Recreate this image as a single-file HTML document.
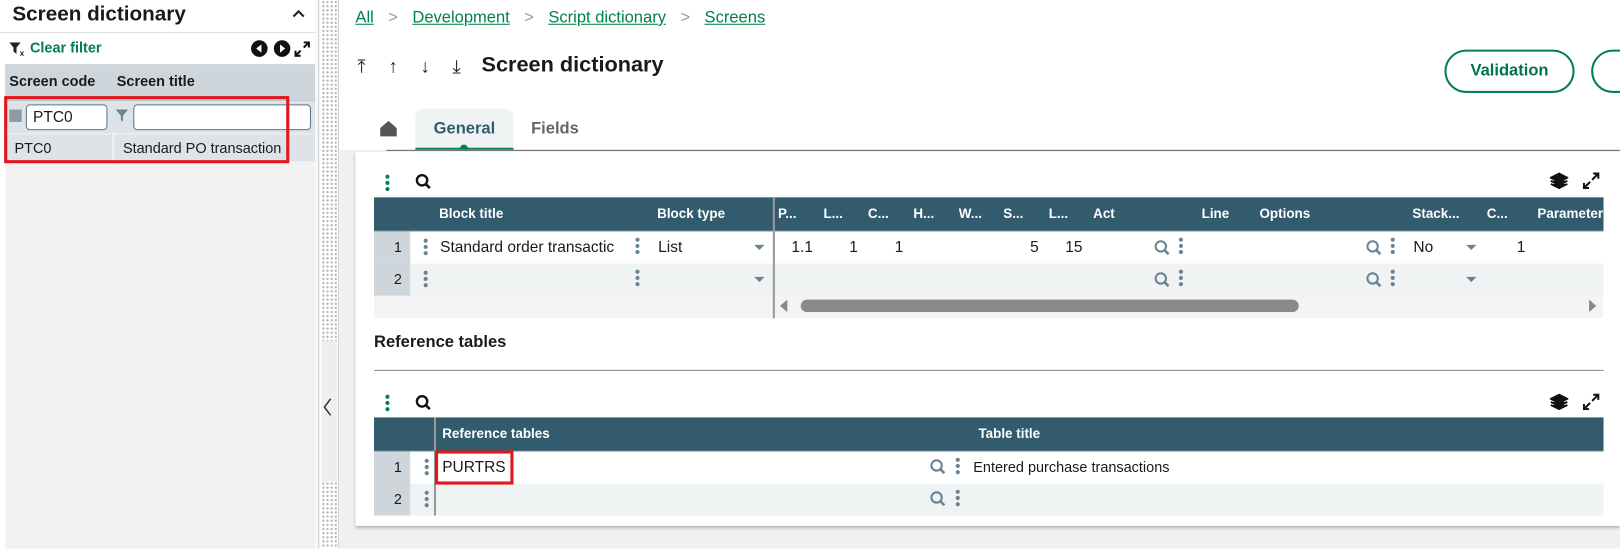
<!DOCTYPE html>
<html><head><meta charset="utf-8"><style>
*{box-sizing:border-box;margin:0;padding:0}
html,body{width:1620px;height:531px;overflow:hidden;background:#fff}
#w{position:absolute;left:0;top:0;width:1568px;height:514px;transform:scale(1.0332);transform-origin:0 0;font-family:"Liberation Sans",sans-serif;color:#1a1a1a}
.a{position:absolute}
.b{font-weight:bold}
.hdr{background:#335b6e;color:#fff;font-weight:bold;font-size:13px}
.dots{position:absolute;width:4px}
.dots i{display:block;width:4px;height:4px;border-radius:2px;background:#6a8393;margin-bottom:2px}
.rn{background:#ced6dc;text-align:right;font-size:14px;padding-right:8px}
.tri{position:absolute;width:0;height:0;border-left:5px solid transparent;border-right:5px solid transparent;border-top:5px solid #6a8393}
.dotted{background-image:radial-gradient(#b8b8b8 1px,transparent 1.2px);background-size:4px 4px;background-color:#fff}
</style></head><body><div id="w">
<div class="a b" style="left:12px;top:3px;font-size:20px">Screen dictionary</div>
<svg class="a" style="left:282px;top:8px" width="14" height="10"><path d="M2 8 L7 3 L12 8" stroke="#222" stroke-width="2" fill="none"/></svg>
<div class="a" style="left:0;top:31px;width:305px;height:1px;background:#ddd"></div>
<svg class="a" style="left:9px;top:41px" width="16" height="13"><path d="M0 0 H11 L7 5 V11 L4 9 V5Z" fill="#222"/><text x="10" y="13" font-size="8" font-weight="bold" fill="#222" font-family="Liberation Sans">x</text></svg>
<div class="a b" style="left:29px;top:38px;font-size:14px;color:#00824a">Clear filter</div>
<div class="a" style="left:243px;top:39px;width:16px;height:16px;border-radius:8px;background:#111"></div>
<svg class="a" style="left:243px;top:39px" width="16" height="16"><path d="M10 4 L5 8 L10 12Z" fill="#fff"/></svg>
<div class="a" style="left:265px;top:39px;width:16px;height:16px;border-radius:8px;background:#111"></div>
<svg class="a" style="left:265px;top:39px" width="16" height="16"><path d="M6 4 L11 8 L6 12Z" fill="#fff"/></svg>
<svg class="a" style="left:285px;top:40px" width="15" height="15"><path d="M9 1 H14 V6 M14 1 L9 6 M6 14 H1 V9 M1 14 L6 9" stroke="#111" stroke-width="2" fill="none"/></svg>
<div class="a" style="left:5px;top:62px;width:300px;height:469px;background:#f2f2f2"></div>
<div class="a b" style="left:5px;top:62px;width:300px;height:35px;background:#ced6dc;font-size:14px"><span class="a" style="left:4px;top:8px">Screen code</span><span class="a" style="left:108px;top:8px">Screen title</span></div>
<div class="a" style="left:5px;top:97px;width:300px;height:1px;background:#b5c0c8"></div>
<div class="a" style="left:5px;top:98px;width:300px;height:31px;background:#dde3e7"></div>
<div class="a" style="left:9px;top:106px;width:12px;height:12px;background:#8a9aa6"></div>
<div class="a" style="left:25px;top:101px;width:79px;height:25px;background:#fff;border:1px solid #5b7585;border-radius:4px;font-size:15px;padding:3px 6px">PTC0</div>
<svg class="a" style="left:112px;top:106px" width="12" height="12"><path d="M0 0 H12 L7 6 V12 L5 10 V6Z" fill="#6a8393"/></svg>
<div class="a" style="left:129px;top:101px;width:172px;height:25px;background:#fff;border:1px solid #5b7585;border-radius:4px"></div>
<div class="a" style="left:5px;top:130px;width:300px;height:26px;background:#dde3e7;font-size:14px"><span class="a" style="left:9px;top:5px">PTC0</span><span class="a" style="left:104px;top:0;width:1px;height:26px;background:#fff"></span><span class="a" style="left:114px;top:5px">Standard PO transaction</span></div>
<div class="a" style="left:4px;top:93px;width:276px;height:65px;border:3px solid #e0181e"></div>
<div class="a" style="left:305px;top:0;width:3px;height:531px;background:#f7f7f7"></div>
<div class="a dotted" style="left:311px;top:0;width:15px;height:330px"></div>
<div class="a dotted" style="left:311px;top:466px;width:15px;height:65px"></div>
<div class="a" style="left:308px;top:0;width:1px;height:531px;background:#ccc"></div>
<div class="a" style="left:327px;top:0;width:1px;height:531px;background:#ccc"></div>
<div class="a" style="left:311px;top:330px;width:15px;height:136px;background:#eee"></div>
<svg class="a" style="left:312px;top:385px" width="10" height="18"><path d="M8 1 L2 9 L8 17" stroke="#222" stroke-width="1.3" fill="none"/></svg>
<div class="a" style="left:344px;top:9px;font-size:16px;color:#00824a"><u>All</u><span style="color:#999;margin:0 14px">&gt;</span><u>Development</u><span style="color:#999;margin:0 14px">&gt;</span><u>Script dictionary</u><span style="color:#999;margin:0 14px">&gt;</span><u>Screens</u></div>
<div class="a" style="left:346px;top:54px;font-size:18px">⤒</div>
<div class="a" style="left:376px;top:54px;font-size:18px">↑</div>
<div class="a" style="left:407px;top:54px;font-size:18px">↓</div>
<div class="a" style="left:438px;top:54px;font-size:18px">⤓</div>
<div class="a b" style="left:466px;top:51px;font-size:21px">Screen dictionary</div>
<div class="a b" style="left:1398px;top:48px;width:126px;height:42px;border:2px solid #00824a;border-radius:21px;color:#00734a;font-size:16px;text-align:center;line-height:38px">Validation</div>
<div class="a" style="left:1540px;top:48px;width:60px;height:42px;border:2px solid #00824a;border-radius:21px"></div>
<svg class="a" style="left:367px;top:116px" width="18" height="17"><path d="M1 8 L9 1 L17 8 V16 H1Z" fill="#555"/></svg>
<div class="a b" style="left:402px;top:105px;width:95px;height:40px;background:#f0f3f4;border-radius:8px 8px 0 0;font-size:16px;color:#335b6e;text-align:center;line-height:40px">General</div>
<div class="a" style="left:402px;top:143px;width:95px;height:2px;background:#00824a"></div>
<div class="a" style="left:445px;top:140px;width:8px;height:8px;border-radius:4px;background:#00824a"></div>
<div class="a b" style="left:514px;top:116px;font-size:16px;color:#666">Fields</div>
<div class="a" style="left:328px;top:145px;width:1292px;height:386px;background:#eef0f1"></div>
<div class="a" style="left:374px;top:145px;width:1246px;height:1px;background:#666"></div>
<div class="a" style="left:344px;top:147px;width:1224px;height:362px;background:#fff;box-shadow:0 2px 3px #aaa"></div>
<div class="dots" style="left:373px;top:169px"><i style="background:#00824a"></i><i style="background:#00824a"></i><i style="background:#00824a"></i></div>
<svg class="a" style="left:402px;top:168px" width="16" height="16"><circle cx="6.5" cy="6.5" r="5" stroke="#111" stroke-width="2.3" fill="none"/><path d="M10 10 L14 14" stroke="#111" stroke-width="2.5"/></svg>
<svg class="a" style="left:1500px;top:167px" width="18" height="16"><path d="M9 1 L17 5 L9 9 L1 5Z M1 8 L9 12 L17 8 M1 11 L9 15 L17 11" stroke="#111" stroke-width="1.8" fill="#111"/></svg>
<svg class="a" style="left:1532px;top:167px" width="16" height="16"><path d="M10 1 H15 V6 M15 1 L9 7 M6 15 H1 V10 M1 15 L7 9" stroke="#111" stroke-width="2" fill="none"/></svg>
<div class="a hdr" style="left:362px;top:191px;width:1190px;height:33px">
<span class="a" style="left:63px;top:8px">Block title</span><span class="a" style="left:274px;top:8px">Block type</span>
<span class="a" style="left:391px;top:8px">P...</span><span class="a" style="left:435px;top:8px">L...</span><span class="a" style="left:478px;top:8px">C...</span><span class="a" style="left:522px;top:8px">H...</span><span class="a" style="left:566px;top:8px">W...</span><span class="a" style="left:609px;top:8px">S...</span><span class="a" style="left:653px;top:8px">L...</span><span class="a" style="left:696px;top:8px">Act</span><span class="a" style="left:801px;top:8px">Line</span><span class="a" style="left:857px;top:8px">Options</span><span class="a" style="left:1005px;top:8px">Stack...</span><span class="a" style="left:1077px;top:8px">C...</span><span class="a" style="left:1126px;top:8px">Parameter</span></div>
<div class="a" style="left:362px;top:223px;width:1190px;height:1px;background:#6d8594"></div>
<div class="a" style="left:362px;top:224px;width:1190px;height:31px;background:#fff"></div>
<div class="a" style="left:362px;top:255px;width:1190px;height:31px;background:#f0f3f4"></div>
<div class="a" style="left:362px;top:286px;width:1190px;height:22px;background:#f4f4f4"></div>
<div class="a rn" style="left:362px;top:224px;width:35px;height:31px;line-height:31px">1</div>
<div class="a rn" style="left:362px;top:255px;width:35px;height:31px;line-height:31px">2</div>
<div class="a" style="left:748px;top:191px;width:2px;height:117px;background:#999"></div>
<div class="dots" style="left:410px;top:231px"><i></i><i></i><i></i></div>
<div class="dots" style="left:410px;top:262px"><i></i><i></i><i></i></div>
<div class="dots" style="left:615px;top:230px"><i></i><i></i><i></i></div>
<div class="dots" style="left:615px;top:261px"><i></i><i></i><i></i></div>
<div class="a" style="left:426px;top:231px;font-size:15px">Standard order transactic</div>
<div class="a" style="left:637px;top:231px;font-size:15px">List</div>
<div class="tri" style="left:730px;top:237px"></div><div class="tri" style="left:730px;top:268px"></div>
<div class="a" style="left:766px;top:231px;font-size:15px">1.1</div>
<div class="a" style="left:822px;top:231px;font-size:15px">1</div>
<div class="a" style="left:866px;top:231px;font-size:15px">1</div>
<div class="a" style="left:997px;top:231px;font-size:15px">5</div>
<div class="a" style="left:1031px;top:231px;font-size:15px">15</div>
<div class="a" style="left:1368px;top:231px;font-size:15px">No</div>
<div class="tri" style="left:1419px;top:237px"></div><div class="tri" style="left:1419px;top:268px"></div>
<div class="a" style="left:1468px;top:231px;font-size:15px">1</div>
<svg class="a" style="left:1117px;top:232px" width="16" height="16"><circle cx="6.5" cy="6.5" r="5" stroke="#6a8393" stroke-width="2" fill="none"/><path d="M10 10 L14 14" stroke="#6a8393" stroke-width="2.5"/></svg>
<svg class="a" style="left:1117px;top:263px" width="16" height="16"><circle cx="6.5" cy="6.5" r="5" stroke="#6a8393" stroke-width="2" fill="none"/><path d="M10 10 L14 14" stroke="#6a8393" stroke-width="2.5"/></svg>
<svg class="a" style="left:1322px;top:232px" width="16" height="16"><circle cx="6.5" cy="6.5" r="5" stroke="#6a8393" stroke-width="2" fill="none"/><path d="M10 10 L14 14" stroke="#6a8393" stroke-width="2.5"/></svg>
<svg class="a" style="left:1322px;top:263px" width="16" height="16"><circle cx="6.5" cy="6.5" r="5" stroke="#6a8393" stroke-width="2" fill="none"/><path d="M10 10 L14 14" stroke="#6a8393" stroke-width="2.5"/></svg>
<div class="dots" style="left:1141px;top:230px"><i></i><i></i><i></i></div>
<div class="dots" style="left:1141px;top:261px"><i></i><i></i><i></i></div>
<div class="dots" style="left:1346px;top:230px"><i></i><i></i><i></i></div>
<div class="dots" style="left:1346px;top:261px"><i></i><i></i><i></i></div>
<svg class="a" style="left:754px;top:290px" width="10" height="12"><path d="M8 0 L1 6 L8 12Z" fill="#888"/></svg>
<div class="a" style="left:775px;top:290px;width:482px;height:12px;border-radius:6px;background:#8a8a8a"></div>
<svg class="a" style="left:1537px;top:290px" width="10" height="12"><path d="M1 0 L8 6 L1 12Z" fill="#888"/></svg>
<div class="a b" style="left:362px;top:323px;font-size:16px">Reference tables</div>
<div class="a" style="left:362px;top:358px;width:1190px;height:1px;background:#888"></div>
<div class="dots" style="left:373px;top:382px"><i style="background:#00824a"></i><i style="background:#00824a"></i><i style="background:#00824a"></i></div>
<svg class="a" style="left:402px;top:382px" width="16" height="16"><circle cx="6.5" cy="6.5" r="5" stroke="#111" stroke-width="2.3" fill="none"/><path d="M10 10 L14 14" stroke="#111" stroke-width="2.5"/></svg>
<svg class="a" style="left:1500px;top:381px" width="18" height="16"><path d="M9 1 L17 5 L9 9 L1 5Z M1 8 L9 12 L17 8 M1 11 L9 15 L17 11" stroke="#111" stroke-width="1.8" fill="#111"/></svg>
<svg class="a" style="left:1532px;top:381px" width="16" height="16"><path d="M10 1 H15 V6 M15 1 L9 7 M6 15 H1 V10 M1 15 L7 9" stroke="#111" stroke-width="2" fill="none"/></svg>
<div class="a hdr" style="left:362px;top:404px;width:1190px;height:33px"><span class="a" style="left:66px;top:8px">Reference tables</span><span class="a" style="left:585px;top:8px">Table title</span></div>
<div class="a" style="left:362px;top:436px;width:1190px;height:1px;background:#6d8594"></div>
<div class="a" style="left:362px;top:437px;width:1190px;height:31px;background:#fff"></div>
<div class="a" style="left:362px;top:468px;width:1190px;height:31px;background:#f0f3f4"></div>
<div class="a rn" style="left:362px;top:437px;width:35px;height:31px;line-height:31px">1</div>
<div class="a rn" style="left:362px;top:468px;width:35px;height:31px;line-height:31px">2</div>
<div class="a" style="left:420px;top:404px;width:2px;height:95px;background:#999"></div>
<div class="dots" style="left:411px;top:444px"><i></i><i></i><i></i></div>
<div class="dots" style="left:411px;top:475px"><i></i><i></i><i></i></div>
<div class="a" style="left:428px;top:444px;font-size:15px">PURTRS</div>
<div class="a" style="left:421px;top:436px;width:76px;height:33px;border:3px solid #e0181e"></div>
<svg class="a" style="left:900px;top:444px" width="16" height="16"><circle cx="6.5" cy="6.5" r="5" stroke="#6a8393" stroke-width="2" fill="none"/><path d="M10 10 L14 14" stroke="#6a8393" stroke-width="2.5"/></svg>
<svg class="a" style="left:900px;top:475px" width="16" height="16"><circle cx="6.5" cy="6.5" r="5" stroke="#6a8393" stroke-width="2" fill="none"/><path d="M10 10 L14 14" stroke="#6a8393" stroke-width="2.5"/></svg>
<div class="dots" style="left:925px;top:443px"><i></i><i></i><i></i></div>
<div class="dots" style="left:925px;top:474px"><i></i><i></i><i></i></div>
<div class="a" style="left:942px;top:444px;font-size:14px">Entered purchase transactions</div>
</div></body></html>
